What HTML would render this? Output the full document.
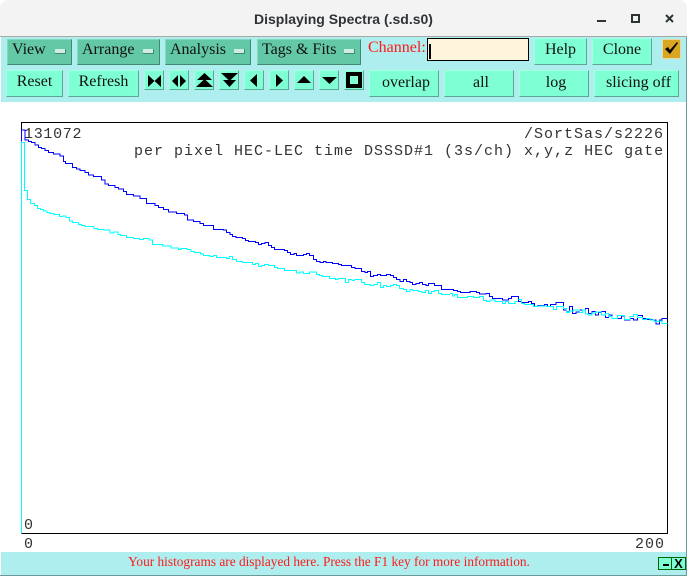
<!DOCTYPE html>
<html><head><meta charset="utf-8">
<style>
html,body{margin:0;padding:0;background:#fff;}
body{width:687px;height:576px;position:relative;overflow:hidden;font-family:"Liberation Serif",serif;}
div{position:absolute;box-sizing:border-box;}
.b{background:#7fffd4;border:1px solid;border-color:#a5ffe2 #5aa894 #5aa894 #a5ffe2;color:#111;font-size:16px;text-align:center;line-height:22px;white-space:nowrap;}
.p{padding-left:4px;line-height:24px;}
.m{background:#63c8a6;border:1px solid;border-color:#85d8bc #3f8a72 #3f8a72 #85d8bc;color:#111;font-size:16px;line-height:20px;white-space:nowrap;padding-left:4px;top:39px;height:26px;}
.m i{position:absolute;top:9px;width:11px;height:5px;background:#d0ece2;border-bottom:1px solid #3f8a72;border-right:1px solid #3f8a72;box-sizing:border-box;}
.t{font-family:"Liberation Mono",monospace;font-size:15px;color:#333;white-space:nowrap;letter-spacing:1px;line-height:16px;}
</style></head><body>
<div style="left:0;top:0;width:687px;height:37px;background:#f3f3f3;border-bottom:1px solid #a8a8a4;border-radius:8px 8px 0 0;"></div>
<div style="left:0;top:10px;width:687px;text-align:center;font:bold 14px/18px 'Liberation Sans',sans-serif;color:#2e3436;">Displaying Spectra (.sd.s0)</div>
<div style="left:1px;top:37px;width:685px;height:65px;background:#afeeee;"></div>
<div style="left:1px;top:552px;width:685px;height:23px;background:#afeeee;"></div>
<div style="left:0;top:575px;width:687px;height:1px;background:#6a9a9a;"></div>
<div style="left:686px;top:37px;width:1px;height:539px;background:#6a9a9a;"></div>

<div class="m" style="left:7px;width:65px;">View<i style="left:47px"></i></div>
<div class="m" style="left:77px;width:83px;">Arrange<i style="left:65px"></i></div>
<div class="m" style="left:165px;width:86px;">Analysis<i style="left:68px"></i></div>
<div class="m" style="left:257px;width:104px;">Tags &amp; Fits<i style="left:86px"></i></div>

<div style="left:368px;top:39px;color:#ff1a1a;font-size:16px;line-height:18px;white-space:nowrap;">Channel:</div>
<div style="left:427px;top:38px;width:102px;height:23px;background:#fff5dc;border:1px solid #000;"></div>
<div style="left:429px;top:44px;width:2px;height:15px;background:#000;"></div>
<div class="b" style="left:534px;top:38px;width:53px;height:27px;">Help</div>
<div class="b" style="left:592px;top:38px;width:60px;height:27px;">Clone</div>
<div style="left:662px;top:39px;width:19px;height:20px;background:#daa520;border:1px solid #e8d8a8;"></div>

<div class="b" style="left:6px;top:70px;width:57px;height:27px;">Reset</div>
<div class="b" style="left:68px;top:70px;width:71px;height:27px;">Refresh</div>
<div class="b" style="left:144px;top:70px;width:20px;height:20px;"></div>
<div class="b" style="left:169px;top:70px;width:20px;height:20px;"></div>
<div class="b" style="left:194px;top:70px;width:20px;height:20px;"></div>
<div class="b" style="left:219px;top:70px;width:20px;height:20px;"></div>
<div class="b" style="left:244px;top:70px;width:20px;height:20px;"></div>
<div class="b" style="left:269px;top:70px;width:20px;height:20px;"></div>
<div class="b" style="left:294px;top:70px;width:20px;height:20px;"></div>
<div class="b" style="left:319px;top:70px;width:20px;height:20px;"></div>
<div class="b" style="left:344px;top:70px;width:20px;height:20px;"></div>
<div class="b p" style="left:369px;top:70px;width:70px;height:27px;">overlap</div>
<div class="b p" style="left:444px;top:70px;width:70px;height:27px;">all</div>
<div class="b p" style="left:519px;top:70px;width:70px;height:27px;">log</div>
<div class="b p" style="left:594px;top:70px;width:85px;height:27px;">slicing off</div>

<div class="t" style="left:24px;top:127px;letter-spacing:.7px;">131072</div>
<div class="t" style="left:524px;top:127px;">/SortSas/s2226</div>
<div class="t" style="left:134px;top:144px;white-space:pre;">per pixel HEC-LEC time DSSSD#1 (3s/ch) x,y,z HEC gate</div>
<div class="t" style="left:24px;top:518px;">0</div>
<div class="t" style="left:24px;top:537px;">0</div>
<div class="t" style="left:635px;top:537px;">200</div>

<div style="left:0;top:553px;width:658px;text-align:center;color:#ff1a1a;font-size:13.33px;line-height:18px;white-space:nowrap;">Your histograms are displayed here. Press the F1 key for more information.</div>
<div style="left:658px;top:557px;width:14px;height:13px;background:#7fffd4;border:1px solid #006400;"></div>
<div style="left:671px;top:557px;width:15px;height:13px;background:#7fffd4;border:1px solid #006400;color:#000;font:bold 13px/12px 'Liberation Sans',sans-serif;text-align:center;">X</div>

<svg width="687" height="576" viewBox="0 0 687 576" style="position:absolute;left:0;top:0;">
<rect x="597" y="20" width="9" height="2" fill="#2e3436"/>
<rect x="632" y="15" width="7" height="7" fill="none" stroke="#2e3436" stroke-width="2"/>
<path d="M666 15L673 22M673 15L666 22" stroke="#2e3436" stroke-width="2" fill="none"/>
<path d="M665 49L668 47L670 50L677 42L678 43L670 54Z" fill="#000"/>
<g fill="#000">
<path d="M148 75L154.500 81L148 87ZM161 75L154.500 81L161 87Z"/>
<path d="M172 81L178 75V87ZM186 81L180 75V87Z"/>
<path d="M204.500 73L212 80H197ZM204.500 79L213 87H196Z"/>
<path d="M221 73H238L229.500 81ZM223 80H236L229.500 87Z"/>
<path d="M250 80.500L257 74V87Z"/>
<path d="M276 74L283 80.500L276 87Z"/>
<path d="M304 76L311 83H297Z"/>
<path d="M322 77H337L329.500 84Z"/>
<path d="M346 72H362V88H346ZM350 76V84H358V76Z" fill-rule="evenodd"/>
<rect x="663" y="564" width="6" height="2"/>
</g>
<path d="M21.500 131V122.500H667.500V533.500H21.500" fill="none" stroke="#000" stroke-width="1" shape-rendering="crispEdges"/>
<g fill="none" stroke-width="1" shape-rendering="crispEdges">
<path d="M21.500 533V142" stroke="#00ffff"/>
<g stroke="#00ffff">
<path vector-effect="non-scaling-stroke" transform="translate(0,115) scale(.33333)" d="M64 82H73V226H83V253H92V265H103V271H112V280H122V283H131V288H141V292H150V296H162V299H178V305H188V303H198V307H208V318H218V322H235V328H245V332H255V334H282V340H292V343H312V345H330V354H340V351H354V358H362V362H380V367H400V370H418V373H430V370H447V375H457V388H490"/>
<path vector-effect="non-scaling-stroke" transform="translate(155,205) scale(.33333)" d="M22 118V123H48V129H70V133H78V130H96V133H108V140H118V143H136V147H145V152H165V155H175V152H185V157H195"/>
<path vector-effect="non-scaling-stroke" transform="translate(220,200) scale(.33333)" d="M0 172H20V175H28V169H38V178H50V184H68V187H98V193H106V190H116V199H124V196H134V193H146V196H164V202H172V205H194V211H230V219H240V216H250V220H268V216H290V223H298V226H308V229H328V235H346V238H354V235H376V247H386V238H396V241H404V238H424V247H434V253H452V256H462V253H472V247H482V262H490V256H500V259H512V256H520V253H530V256H538V265H550V268H560V274H570V268H578V271H596V274H606V277H616V271H626V280H634V274H644V271H656V280H665V283H690"/>
<path vector-effect="non-scaling-stroke" transform="translate(450,260) scale(.33333)" d="M0 100H8V108H14V103H22V112H52V109H70V112H88V109H100V122H110V124H120V120H135V124H157V130H167V124H175V130H195V124H205V118H214V130H224V133H250V140H262V138H290V139H310V148H320V139H340V145H350V158H358V153H370V150H388V158H398V150H406V162H416V165H426V159H436V156H454V165H466V161H476V170H486V175H502V166H524V178H540V170H550V163H563V172H578V178H590V175H600V180H612V185H624V183H636V190H652"/>
</g>
<g stroke="#0000ff">
<path vector-effect="non-scaling-stroke" transform="translate(0,115) scale(.33333)" d="M64 80V45H75V75H85V80H95V83H105V90H115V97H125V100H135V107H145V113H160V117H180V123H190V140H197V146H217V157H230V162H240V167H255V172H265V180H280V185H305V195H315V207H325V212H345V217H355V222H370V230H380V238H400V243H420V250H440V265H465V272H475V278H490V283H505V291H530V295H553V300H563V315H580V320H600V325H610V332H640V343H660"/>
<path vector-effect="non-scaling-stroke" transform="translate(220,200) scale(.33333)" d="M0 88H10V90H20V97H30V103H38V109H48V112H68V115H76V121H86V124H106V127H116V133H125V130H135V127H146V136H155V142H163V148H193V151H203V157H212V163H222V160H230V166H250V163H260V160H268V166H280V178H290V184H300V187H310V184H318V187H338V190H355V193H365V196H395V202H405V205H425V214H435V217H443V214H452V229H461V226H472V223H482V226H500V223H512V226H520V232H530V238H540V244H550V238H560V244H570V247H578V253H588V250H598V247H608V253H618V256H626V250H644V256H665V268H690"/>
<path vector-effect="non-scaling-stroke" transform="translate(450,260) scale(.33333)" d="M0 88H10V92H22V94H32V97H60V94H80V97H88V102H108V100H118V109H128V115H158V120H175V115H184V109H205V124H215V128H235V125H245V130H254V140H263V136H283V133H293V140H302V133H318V127H340V150H350V156H358V140H367V160H378V156H388V150H406V145H416V160H426V155H436V165H445V157H454V155H466V172H476V165H486V175H514V168H524V180H540V175H550V180H563V167H578V176H590V178H608V180H618V192H628V180H636V176H652"/>
</g>
<path stroke="#00ffff" vector-effect="non-scaling-stroke" transform="translate(450,260) scale(.33333)" d="M205 118H214V130H224V133H250V140H262V138H290V139H310V148H320V139H340V145H350V158H358V153H370V150H388V158H398V150H406V162H416V165H426V159H436V156H454V165H466V161H476V170H486V175H502V166H524V178H540V170H550V163H563V172H578V178H590V175H600V180H612V185H624V183H636V190H652"/>
</g>
</svg>
</body></html>
